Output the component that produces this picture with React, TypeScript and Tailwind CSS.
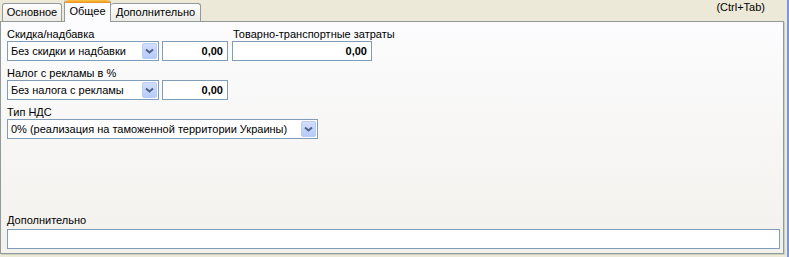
import type { ReactNode } from 'react'

const FONT = 'font-["Liberation_Sans",Arial,sans-serif]'

function Chevron() {
  return (
    <svg width="9" height="6" viewBox="0 0 9 6" className="block">
      <path d="M1 1.5 L4.5 4.5 L8 1.5" fill="none" stroke="#4D6185" strokeWidth="2" />
    </svg>
  )
}

/** Комбобокс в стиле Windows XP */
function Combo({ text, width }: { text: string; width: string }) {
  return (
    <div className={`flex h-[20px] ${width} items-center border border-[#7F9DB9] bg-white pl-[3px] pr-[1px]`}>
      <span className="flex-1 truncate text-[11px] leading-[13px] text-black">{text}</span>
      <div className="flex h-[16px] w-[15px] items-center justify-center rounded-[2px] border border-[#B9CCF6] bg-linear-to-b from-[#D2DEFC] to-[#B7CBF8]">
        <Chevron />
      </div>
    </div>
  )
}

function NumBox({ width }: { width: string }) {
  return (
    <div className={`flex h-[20px] ${width} items-center justify-end border border-[#7F9DB9] bg-white pr-[4px] text-[11px] font-bold leading-[13px] text-black`}>
      0,00
    </div>
  )
}

function Label({ children }: { children: ReactNode }) {
  return <div className="h-[13px] text-[11px] leading-[13px] text-black whitespace-nowrap">{children}</div>
}

export default function App() {
  return (
    <div className={`flex h-[257px] w-[789px] bg-[#ECE9D8] ${FONT}`}>
      <div className="flex w-[786px] flex-col">
        {/* Вкладки */}
        <div className="flex h-[21px] items-end pl-[2px]">
          <div className="flex h-[18px] w-[60px] items-center justify-center rounded-t-[3px] border border-b-0 border-[#919B9C] bg-linear-to-b from-[#FEFEFE] to-[#ECEBE6] text-[11px] text-black">
            Основное
          </div>
          <div className="relative z-10 -mb-px ml-[2px] flex h-[22px] w-[47px] flex-col rounded-t-[3px] border-x border-[#919B9C] bg-[#FCFCFE]">
            <div className="h-[3px] rounded-t-[3px] bg-linear-to-b from-[#FFC83C] to-[#E68B2C]" />
            <div className="flex flex-1 items-center justify-center pb-[2px] text-[11px] text-black">Общее</div>
          </div>
          <div className="flex h-[18px] w-[90px] items-center justify-center rounded-t-[3px] border border-b-0 border-l-0 border-[#919B9C] bg-linear-to-b from-[#FEFEFE] to-[#ECEBE6] text-[11px] text-black">
            Дополнительно
          </div>
          <div className="mr-[21px] ml-auto self-start pt-[1px] text-[11px] leading-[13px] text-black">(Ctrl+Tab)</div>
        </div>

        {/* Панель */}
        <div className="flex h-[233px] w-[784px] flex-col border border-[#919B9C] bg-linear-to-b from-[#FCFCFE] to-[#F3F1EC] px-[6px] pt-[6px] pb-[4px] shadow-[1px_1px_0_#D0CEBF]">
          <div className="flex gap-[4px]">
            <div className="flex flex-col">
              <Label>Скидка/надбавка</Label>
              <div className="flex gap-[3px]">
                <Combo text="Без скидки и надбавки" width="w-[152px]" />
                <NumBox width="w-[66px]" />
              </div>
            </div>
            <div className="flex flex-col">
              <div className="pl-[1px]">
                <Label>Товарно-транспортные затраты</Label>
              </div>
              <NumBox width="w-[140px]" />
            </div>
          </div>

          <div className="mt-[6px] flex flex-col">
            <Label>Налог с рекламы в %</Label>
            <div className="flex gap-[3px]">
              <Combo text="Без налога с рекламы" width="w-[152px]" />
              <NumBox width="w-[66px]" />
            </div>
          </div>

          <div className="mt-[6px] flex flex-col">
            <Label>Тип НДС</Label>
            <Combo text="0% (реализация на таможенной территории Украины)" width="w-[311px]" />
          </div>

          <div className="mt-auto flex flex-col">
            <div className="pb-[2px]">
              <Label>Дополнительно</Label>
            </div>
            <div className="h-[20px] w-[773px] border border-[#7F9DB9] bg-white" />
          </div>
        </div>
      </div>
      <div className="w-[3px] border-l border-[#ECE9D8] bg-[#7A96DF]" />
    </div>
  )
}
